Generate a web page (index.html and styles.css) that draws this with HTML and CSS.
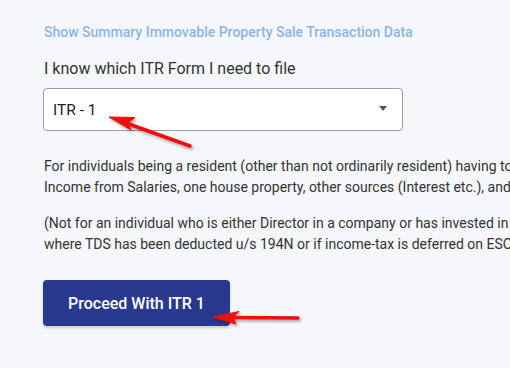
FILE: index.html
```html
<!DOCTYPE html>
<html>
<head>
<meta charset="utf-8">
<link rel="stylesheet" href="styles.css">
</head>
<body>
<main class="page">
  <a class="summary-link">Show Summary Immovable Property Sale Transaction Data</a>
  <div class="label">I know which ITR Form I need to file</div>
  <div class="select">
    <span class="select-value">ITR - 1</span>
    <span class="caret"></span>
  </div>
  <p class="desc">For individuals being a resident (other than not ordinarily resident) having total income upto Rs.50 lakh, having<br>Income from Salaries, one house property, other sources (Interest etc.), and agricultural income upto Rs.5 thousand</p>
  <p class="desc note">(Not for an individual who is either Director in a company or has invested in unlisted equity shares or in cases<br>where TDS has been deducted u/s 194N or if income-tax is deferred on ESOP)</p>
  <button class="proceed">Proceed With ITR 1</button>
</main>
<svg class="arrows" width="510" height="368" viewBox="0 0 510 368">
  <defs>
    <filter id="sh" x="-20%" y="-50%" width="140%" height="200%">
      <feDropShadow dx="1.5" dy="2" stdDeviation="1.5" flood-color="#000" flood-opacity="0.35"/>
    </filter>
  </defs>
  <g filter="url(#sh)" fill="#f20d0d" stroke="#f20d0d">
    <line x1="126" y1="123" x2="190" y2="146" stroke-width="3.5" stroke-linecap="round"/>
    <polygon points="109,117 135,117.5 128,123 131,130" stroke-width="1" stroke-linejoin="round"/>
    <line x1="232" y1="317.5" x2="298" y2="318" stroke-width="3.5" stroke-linecap="round"/>
    <polygon points="213,317 239,311.5 233,317.5 236,324" stroke-width="1" stroke-linejoin="round"/>
  </g>
</svg>
</body>
</html>
```
FILE: styles.css
```css
html, body {
  margin: 0;
  padding: 0;
  background: #f5f7fb;
  overflow: hidden;
  width: 510px;
  height: 368px;
}
body {
  position: relative;
  font-family: Roboto, "Liberation Sans", sans-serif;
  color: #333333;
}
.page {
  padding: 22px 0 0 44px;
  width: 900px;
  display: flex;
  flex-direction: column;
  align-items: flex-start;
}
.summary-link {
  font-size: 14px;
  line-height: 20px;
  font-weight: 500;
  color: #8cb5e6;
  cursor: pointer;
}
.label {
  margin-top: 14.5px;
  font-size: 16px;
  line-height: 24px;
  color: #333;
}
.select {
  margin-top: 7.5px;
  margin-left: -1px;
  box-sizing: border-box;
  width: 360px;
  height: 43px;
  background: #fff;
  border: 1px solid #9e9e9e;
  border-radius: 4px;
  display: flex;
  align-items: center;
  justify-content: space-between;
  padding: 0 15px 0 9px;
}
.select-value {
  font-size: 15.5px;
  color: #222;
}
.caret {
  width: 0;
  height: 0;
  border-left: 4.5px solid transparent;
  border-right: 4.5px solid transparent;
  border-top: 5px solid #555;
  margin-top: -3px;
}
.desc {
  margin: 25px 0 0 0;
  font-size: 14px;
  line-height: 21px;
  white-space: nowrap;
  color: #333;
}
.desc.note {
  margin-top: 15px;
}
.proceed {
  margin-top: 25px;
  margin-left: -1px;
  width: 187px;
  height: 46px;
  border: none;
  border-radius: 4px;
  background: #28398f;
  color: #fff;
  font-family: Roboto, "Liberation Sans", sans-serif;
  font-size: 16px;
  font-weight: 500;
  box-shadow: 0 2px 3px rgba(0,0,0,0.18);
  cursor: pointer;
}
.arrows {
  position: absolute;
  left: 0;
  top: 0;
  pointer-events: none;
}
```
